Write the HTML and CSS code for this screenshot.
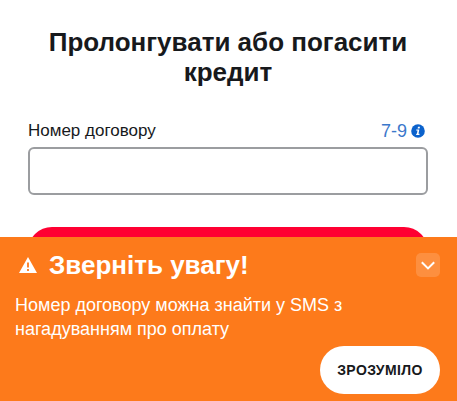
FILE: index.html
```html
<!DOCTYPE html>
<html lang="uk">
<head>
    <meta charset="UTF-8">
    <meta name="viewport" content="width=device-width, initial-scale=1.0">
    <title>Пролонгувати або погасити кредит</title>
    <link rel="stylesheet" href="styles.css">
</head>
<body>
    <main class="page">
        <h1 class="page-title">Пролонгувати або погасити кредит</h1>

        <form class="form">
            <div class="field-head">
                <label for="contract">Номер договору</label>
                <span class="field-hint">
                    7-9
                    <svg class="info-icon" viewBox="0 0 14 14">
                        <circle cx="7" cy="7" r="6.8" fill="#0b62cc"/>
                        <path d="M7 2.7h2l-.4 1.7h-2zM5.3 5.4h3L7.5 9.7h1.1l-.2 1.2H5.1l.2-1.2h.6l.6-3.1H5.1z" fill="#fff"/>
                    </svg>
                </span>
            </div>
            <input class="field-input" id="contract" type="text">
            <button class="submit-btn" type="button"></button>
        </form>
    </main>

    <section class="notice">
        <div class="notice-head">
            <svg class="warning-icon" viewBox="0 0 18 16">
                <path d="M9 0L18 16H0z" fill="#fff"/>
                <path d="M8.1 5.5h1.8v5H8.1zM8.1 12h1.8v1.9H8.1z" fill="#fd7a1b"/>
            </svg>
            <h2 class="notice-title">Зверніть увагу!</h2>
            <button class="notice-toggle" type="button">
                <svg viewBox="0 0 24 24" width="24" height="24">
                    <path d="M5.8 9.2l6.2 6.2 6.2-6.2" fill="none" stroke="#fff" stroke-width="2"/>
                </svg>
            </button>
        </div>
        <p class="notice-text">Номер договору можна знайти у SMS з нагадуванням про оплату</p>
        <button class="notice-btn" type="button">ЗРОЗУМІЛО</button>
    </section>
</body>
</html>
```
FILE: styles.css
```css
* {
    box-sizing: border-box;
}

body {
    margin: 0;
    height: 401px;
    overflow: hidden;
    display: flex;
    flex-direction: column;
    font-family: "Liberation Sans", Arial, sans-serif;
    color: #17191c;
    background: #fff;
}

.page {
    height: 237px;
    flex: none;
    overflow: hidden;
    padding: 27px 29px 0 28px;
}

.page-title {
    margin: 0;
    font-size: 26px;
    line-height: 30px;
    text-align: center;
}

.field-head {
    display: flex;
    justify-content: space-between;
    align-items: center;
    height: 20px;
    margin-top: 34px;
    font-size: 17px;
}

.field-hint {
    display: flex;
    align-items: center;
    gap: 4px;
    padding-right: 3px;
    font-size: 18px;
    color: #3b78cb;
}

.info-icon {
    width: 14px;
    height: 14px;
}

.field-input {
    display: block;
    width: 100%;
    height: 48px;
    margin-top: 6px;
    padding: 0 12px;
    border: 2px solid #9b9da0;
    border-radius: 6px;
    font: inherit;
}

.submit-btn {
    display: block;
    width: 100%;
    height: 48px;
    margin-top: 32px;
    border: 0;
    border-radius: 24px;
    background: #ff0032;
}

.notice {
    flex: 1;
    display: flex;
    flex-direction: column;
    padding: 13px 17px 0 15px;
    background: #fd7a1b;
    color: #fff;
}

.notice-head {
    display: flex;
    align-items: center;
    height: 30px;
}

.warning-icon {
    width: 18px;
    height: 16px;
    margin: 0 12px 0 4px;
}

.notice-title {
    flex: 1;
    margin: 0;
    font-size: 26px;
    line-height: 30px;
}

.notice-toggle {
    width: 24px;
    height: 24px;
    padding: 0;
    border: 0;
    border-radius: 5px;
    background: rgba(255, 255, 255, 0.16);
}

.notice-text {
    margin: 13px 0 0;
    max-width: 340px;
    font-size: 18px;
    line-height: 24px;
}

.notice-btn {
    align-self: flex-end;
    width: 120px;
    height: 48px;
    margin-top: 5px;
    padding: 0;
    border: 0;
    border-radius: 24px;
    background: #fff;
    color: #17191c;
    font-family: inherit;
    font-size: 14px;
    font-weight: bold;
    letter-spacing: 0.4px;
}
```
